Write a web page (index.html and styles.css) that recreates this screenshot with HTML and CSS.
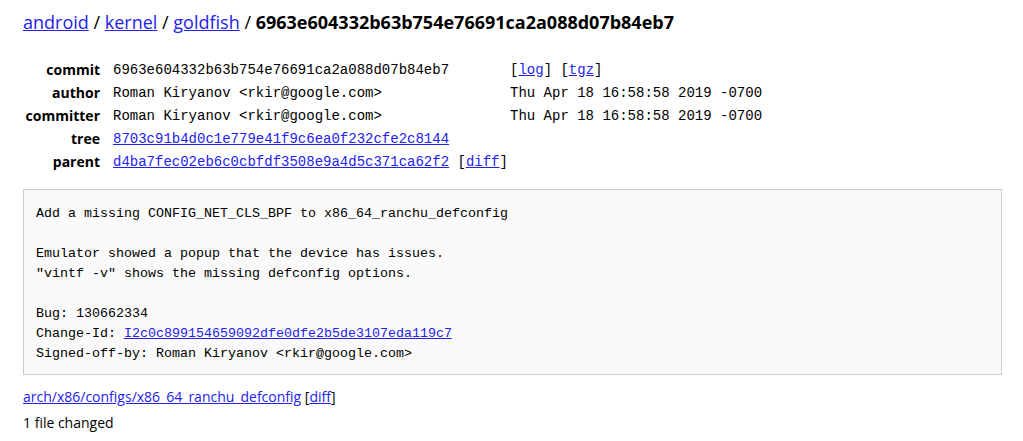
FILE: index.html
```
<!DOCTYPE html>
<html>
<head>
<meta charset="utf-8">
<link rel="stylesheet" href="styles.css">
<title>6963e604332b63b754e76691ca2a088d07b84eb7 - kernel/goldfish</title>
</head>
<body>
<div class="site-content">
  <div class="breadcrumbs"><a href="#">android</a> / <a href="#">kernel</a> / <a href="#">goldfish</a> / <span class="current">6963e604332b63b754e76691ca2a088d07b84eb7</span></div>
  <div class="metadata">
    <div class="title">commit</div><div class="mono">6963e604332b63b754e76691ca2a088d07b84eb7</div><div class="mono">[<a href="#">log</a>] [<a href="#">tgz</a>]</div>
    <div class="title">author</div><div class="mono">Roman Kiryanov &lt;rkir@google.com&gt;</div><div class="mono">Thu Apr 18 16:58:58 2019 -0700</div>
    <div class="title">committer</div><div class="mono">Roman Kiryanov &lt;rkir@google.com&gt;</div><div class="mono">Thu Apr 18 16:58:58 2019 -0700</div>
    <div class="title">tree</div><div class="mono"><a href="#">8703c91b4d0c1e779e41f9c6ea0f232cfe2c8144</a></div><div></div>
    <div class="title">parent</div><div class="mono"><a href="#">d4ba7fec02eb6c0cbfdf3508e9a4d5c371ca62f2</a> [<a href="#">diff</a>]</div><div></div>
  </div>
  <pre class="message">Add a missing CONFIG_NET_CLS_BPF to x86_64_ranchu_defconfig

Emulator showed a popup that the device has issues.
"vintf -v" shows the missing defconfig options.

Bug: 130662334
Change-Id: <a href="#">I2c0c899154659092dfe0dfe2b5de3107eda119c7</a>
Signed-off-by: Roman Kiryanov &lt;rkir@google.com&gt;</pre>
  <ul class="difftree">
    <li><a href="#">arch/x86/configs/x86_64_ranchu_defconfig</a> <span class="diffref">[<a href="#">diff</a>]</span></li>
  </ul>
  <div class="summary">1 file changed</div>
</div>
</body>
</html>
```

FILE: styles.css
```
html, body {
  margin: 0;
  padding: 0;
  background: #fff;
}
body {
  color: #000;
  font-family: "Open Sans", "Liberation Sans", sans-serif;
  font-size: 14px;
}
a {
  color: #2222ee;
}
.site-content {
  padding: 0 21px 0 23px;
}
.breadcrumbs {
  font-size: 18px;
  line-height: 24px;
  padding-top: 10px;
  margin-bottom: 23px;
}
.breadcrumbs .current {
  font-weight: bold;
}
.metadata {
  display: grid;
  grid-template-columns: 77px 384px auto;
  column-gap: 13px;
  grid-auto-rows: 23px;
  align-items: center;
  white-space: nowrap;
  padding-top: 1px;
}
.metadata .title {
  font-weight: bold;
  font-size: 14px;
  text-align: right;
}
.mono {
  font-family: "Liberation Mono", "DejaVu Sans Mono", monospace;
  font-size: 14px;
}
.message {
  margin: 16px 0 0;
  background: #fafafa;
  border: 1px solid #ccc;
  padding: 14px 12px 10px;
  font-family: "Liberation Mono", "DejaVu Sans Mono", monospace;
  font-size: 13.33px;
  line-height: 20px;
  white-space: pre-wrap;
}
.difftree {
  list-style: none;
  margin: 12px 0 0;
  padding: 0;
  line-height: 20px;
}
.summary {
  margin-top: 6px;
  line-height: 20px;
}
```
